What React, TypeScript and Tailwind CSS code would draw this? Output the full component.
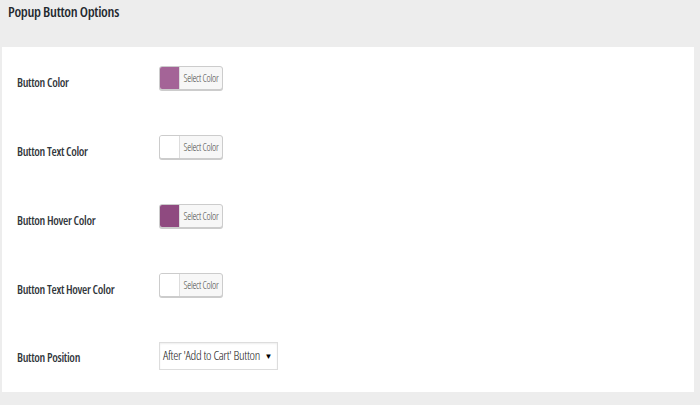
const font = { fontFamily: '"Open Sans", "Liberation Sans", sans-serif', fontStretch: "condensed" as const };

const ColorPicker = ({ color }: { color: string }) => (
  <div className="flex h-[24px] w-[64px] overflow-hidden rounded-[3px] border border-[#cccccc] bg-[#f7f7f7] shadow-[0_1px_0_#cccccc]">
    <span className="w-[19px] shrink-0" style={{ backgroundColor: color }} />
    <span className="flex flex-1 items-center justify-center border-l border-[#dddddd] text-[10px] font-light tracking-[-0.3px] text-[#444444]">
      Select Color
    </span>
  </div>
);

const rows = [
  { label: "Button Color", color: "#a46497" },
  { label: "Button Text Color", color: "#ffffff" },
  { label: "Button Hover Color", color: "#8f4a80" },
  { label: "Button Text Hover Color", color: "#ffffff" },
];

export default function App() {
  return (
    <div className="h-[405px] w-[700px] bg-[#ededed]" style={font}>
      <h2 className="px-[8px] pt-[2px] text-[14.5px] font-semibold leading-[20px] tracking-[-0.3px] text-[#23282d]">
        Popup Button Options
      </h2>
      <div className="ml-[2px] mt-[25px] h-[345px] w-[692px] bg-white pt-[19px]">
        {rows.map((r) => (
          <div key={r.label} className="flex h-[69px] items-start">
            <div className="w-[157px] pl-[15px] pt-[8px] text-[12px] font-semibold tracking-[-0.3px] text-[#32373c]">
              {r.label}
            </div>
            <ColorPicker color={r.color} />
          </div>
        ))}
        <div className="flex items-center">
          <div className="w-[157px] pl-[15px] pt-[3px] text-[12px] font-semibold tracking-[-0.3px] text-[#32373c]">
            Button Position
          </div>
          <div className="flex h-[28px] w-[119px] items-center justify-between border border-[#dddddd] bg-white pl-[3px] pr-[5px] text-[13px] font-light tracking-[-0.3px] text-[#222222] shadow-[inset_0_1px_2px_rgba(0,0,0,0.07)]">
            <span>After 'Add to Cart' Button</span>
            <span className="text-[8px] text-black">▼</span>
          </div>
        </div>
      </div>
    </div>
  );
}
